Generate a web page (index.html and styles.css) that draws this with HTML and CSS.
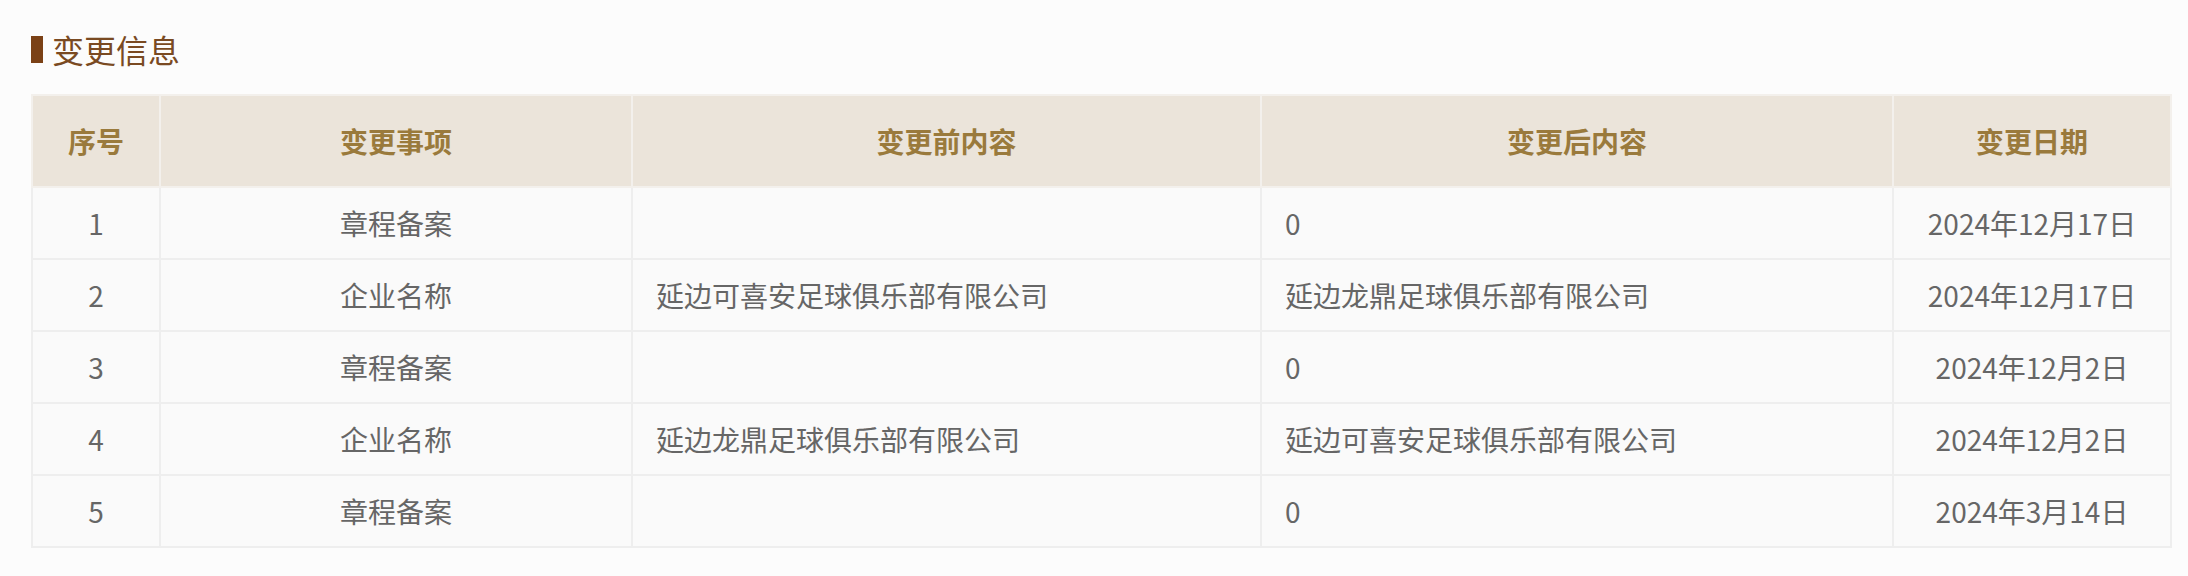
FILE: index.html
```html
<!DOCTYPE html>
<html lang="zh-CN">
<head>
<meta charset="utf-8">
<title>变更信息</title>
<link rel="stylesheet" href="styles.css">
</head>
<body>
<div class="page">
  <h2 class="section-title"><span class="title-bar"></span>变更信息</h2>
  <table class="change-table">
    <colgroup>
      <col class="c-no">
      <col class="c-item">
      <col class="c-before">
      <col class="c-after">
      <col class="c-date">
    </colgroup>
    <thead>
      <tr>
        <th>序号</th>
        <th>变更事项</th>
        <th>变更前内容</th>
        <th>变更后内容</th>
        <th>变更日期</th>
      </tr>
    </thead>
    <tbody>
      <tr>
        <td class="center">1</td>
        <td class="center">章程备案</td>
        <td class="left"></td>
        <td class="left">0</td>
        <td class="center">2024年12月17日</td>
      </tr>
      <tr>
        <td class="center">2</td>
        <td class="center">企业名称</td>
        <td class="left">延边可喜安足球俱乐部有限公司</td>
        <td class="left">延边龙鼎足球俱乐部有限公司</td>
        <td class="center">2024年12月17日</td>
      </tr>
      <tr>
        <td class="center">3</td>
        <td class="center">章程备案</td>
        <td class="left"></td>
        <td class="left">0</td>
        <td class="center">2024年12月2日</td>
      </tr>
      <tr>
        <td class="center">4</td>
        <td class="center">企业名称</td>
        <td class="left">延边龙鼎足球俱乐部有限公司</td>
        <td class="left">延边可喜安足球俱乐部有限公司</td>
        <td class="center">2024年12月2日</td>
      </tr>
      <tr>
        <td class="center">5</td>
        <td class="center">章程备案</td>
        <td class="left"></td>
        <td class="left">0</td>
        <td class="center">2024年3月14日</td>
      </tr>
    </tbody>
  </table>
</div>
</body>
</html>
```

FILE: styles.css
```css
html, body {
  margin: 0;
  padding: 0;
  background: #fcfcfc;
}

body {
  font-family: "Noto Sans CJK SC", "Noto Sans", sans-serif;
  color: #666666;
}

.page {
  padding: 26px 18px 0 31px;
}

.section-title {
  display: flex;
  align-items: center;
  margin: 0;
  height: 46px;
  font-size: 32px;
  font-weight: 400;
  color: #7a4a22;
  line-height: 46px;
}

.title-bar {
  width: 12px;
  height: 27px;
  background: #7b4116;
  margin-right: 9px;
  flex: none;
}

.change-table {
  margin-top: 22px;
  width: 2139px;
  border-collapse: collapse;
  table-layout: fixed;
  background: #fafafa;
  font-size: 28px;
}

.c-no { width: 128px; }
.c-item { width: 472px; }
.c-before { width: 629px; }
.c-after { width: 632px; }
.c-date { width: 278px; }

.change-table th {
  height: 90px;
  padding: 0;
  background: #ebe4da;
  color: #9a7a3c;
  font-weight: 700;
  font-size: 28px;
  text-align: center;
  border: 2px solid #f3f0ec;
}

.change-table td {
  height: 70px;
  padding: 0;
  border: 2px solid #eeeeee;
  line-height: 1;
}

.change-table .center {
  text-align: center;
}

.change-table .left {
  text-align: left;
  padding-left: 23px;
}
```
